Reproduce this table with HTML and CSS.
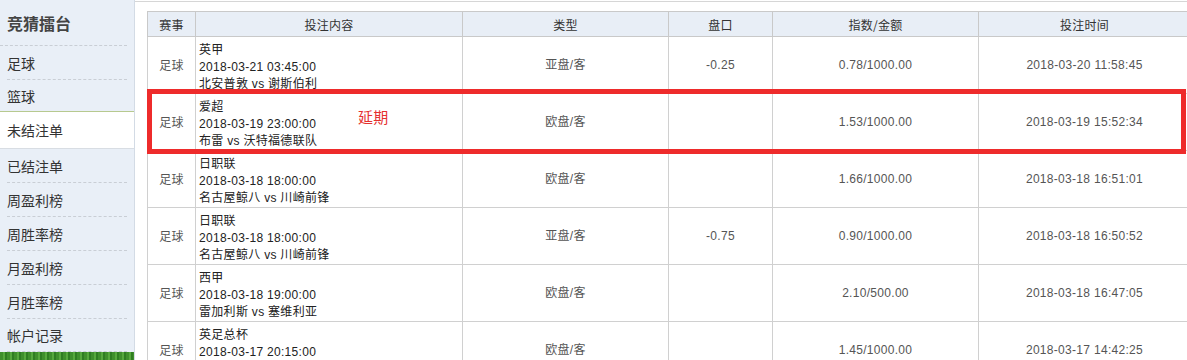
FILE: index.html
```html
<!DOCTYPE html>
<html lang="zh-CN">
<head>
<meta charset="utf-8">
<title>竞猜擂台</title>
<link rel="stylesheet" href="styles.css">
</head>
<body>
<div class="page">
  <aside class="sidebar">
    <div class="side-title">竞猜擂台</div>
    <ul class="side-menu">
      <li class="side-item">足球</li>
      <li class="side-item last-before-active">篮球</li>
      <li class="side-item active">未结注单</li>
      <li class="side-item">已结注单</li>
      <li class="side-item">周盈利榜</li>
      <li class="side-item">周胜率榜</li>
      <li class="side-item">月盈利榜</li>
      <li class="side-item">月胜率榜</li>
      <li class="side-item">帐户记录</li>
    </ul>
    <div class="side-grass"></div>
  </aside>
  <main class="main">
    <div class="table-wrap">
      <table class="bets">
        <colgroup>
          <col class="c-match"><col class="c-content"><col class="c-type"><col class="c-line"><col class="c-odds"><col class="c-time">
        </colgroup>
        <thead>
          <tr><th>赛事</th><th>投注内容</th><th>类型</th><th>盘口</th><th>指数/金额</th><th>投注时间</th></tr>
        </thead>
        <tbody>
          <tr>
            <td class="sport">足球</td>
            <td class="content"><div class="ln">英甲</div><div class="ln">2018-03-21 03:45:00</div><div class="ln">北安普敦 vs 谢斯伯利</div></td>
            <td>亚盘/客</td><td>-0.25</td><td>0.78/1000.00</td><td>2018-03-20 11:58:45</td>
          </tr>
          <tr>
            <td class="sport">足球</td>
            <td class="content"><div class="ln">爱超</div><div class="ln">2018-03-19 23:00:00</div><div class="ln">布雷 vs 沃特福德联队</div><span class="note">延期</span></td>
            <td>欧盘/客</td><td></td><td>1.53/1000.00</td><td>2018-03-19 15:52:34</td>
          </tr>
          <tr>
            <td class="sport">足球</td>
            <td class="content"><div class="ln">日职联</div><div class="ln">2018-03-18 18:00:00</div><div class="ln">名古屋鲸八 vs 川崎前锋</div></td>
            <td>欧盘/客</td><td></td><td>1.66/1000.00</td><td>2018-03-18 16:51:01</td>
          </tr>
          <tr>
            <td class="sport">足球</td>
            <td class="content"><div class="ln">日职联</div><div class="ln">2018-03-18 18:00:00</div><div class="ln">名古屋鲸八 vs 川崎前锋</div></td>
            <td>亚盘/客</td><td>-0.75</td><td>0.90/1000.00</td><td>2018-03-18 16:50:52</td>
          </tr>
          <tr>
            <td class="sport">足球</td>
            <td class="content"><div class="ln">西甲</div><div class="ln">2018-03-18 19:00:00</div><div class="ln">雷加利斯 vs 塞维利亚</div></td>
            <td>欧盘/客</td><td></td><td>2.10/500.00</td><td>2018-03-18 16:47:05</td>
          </tr>
          <tr>
            <td class="sport">足球</td>
            <td class="content"><div class="ln">英足总杯</div><div class="ln">2018-03-17 20:15:00</div><div class="ln"></div></td>
            <td>欧盘/客</td><td></td><td>1.45/1000.00</td><td>2018-03-17 14:42:25</td>
          </tr>
        </tbody>
      </table>
      <div class="highlight"></div>
    </div>
  </main>
</div>
</body>
</html>
```

FILE: styles.css
```css
html, body {
  margin: 0;
  padding: 0;
  background: #fff;
  overflow: hidden;
}
body {
  font-family: "Liberation Sans", "Noto Sans CJK SC", sans-serif;
  color: #333;
}
.page {
  display: flex;
  align-items: flex-start;
  height: 360px;
  overflow: hidden;
}
.sidebar {
  width: 134px;
  flex: none;
  height: 360px;
  background: #e9eff7;
  border-right: 1px solid #d3dbe5;
  display: flex;
  flex-direction: column;
  font-family: "Noto Sans CJK SC", sans-serif;
}
.side-title {
  height: 45px;
  padding-left: 7px;
  display: flex;
  align-items: center;
  font-size: 16px;
  font-weight: bold;
  color: #444;
  border-bottom: 1px dashed #c9ced5;
  margin-right: 7px;
}
.side-menu {
  list-style: none;
  margin: 0;
  padding: 0;
}
.side-item {
  height: 33px;
  margin: 0 7px;
  display: flex;
  align-items: center;
  font-size: 14px;
  color: #333;
  border-bottom: 1px dashed #c9ced5;
}
.side-item.last-before-active {
  height: 31px;
  border-bottom: none;
}
.side-item.active {
  margin: 0;
  padding-left: 7px;
  height: 36px;
  background: #fff;
  border-top: 1px solid #b7c98f;
  border-bottom: 1px solid #d8dde3;
}
.side-item:last-child {
  height: 32px;
}
.side-grass {
  flex: 1;
  background: repeating-linear-gradient(90deg, #3f8f2c 0 3px, #56a83d 3px 5px, #2f7d22 5px 7px);
}
.main {
  flex: 1;
  margin-top: 1px;
  border-top: 1px solid #d6d6d6;
  padding: 9px 0 0 12px;
}
.table-wrap {
  position: relative;
  width: 1043px;
}
.bets {
  border-collapse: collapse;
  table-layout: fixed;
  width: 1043px;
  font-size: 12px;
  letter-spacing: 0.3px;
}
.c-match { width: 48px; }
.c-content { width: 267px; }
.c-type { width: 206px; }
.c-line { width: 104px; }
.c-odds { width: 206px; }
.c-time { width: 212px; }
.bets th {
  height: 24px;
  background: #e8eef6;
  border: 1px solid #c9c9c9;
  font-weight: normal;
  color: #333;
  padding: 0;
  font-family: "Noto Sans CJK SC", sans-serif;
  font-size: 12px;
}
.bets td {
  height: 48px;
  border: 1px solid #d0d0d0;
  text-align: center;
  vertical-align: middle;
  color: #555;
  padding: 0;
  line-height: 16px;
}
.bets td.content {
  text-align: left;
  padding: 5px 3px 0;
  color: #222;
  position: relative;
  vertical-align: top;
}
.bets td.sport {
  font-family: "Noto Sans CJK SC", sans-serif;
}
.ln {
  height: 17px;
  line-height: 17px;
  white-space: nowrap;
}
.note {
  position: absolute;
  left: 162px;
  top: 13px;
  color: #e5302e;
  font-size: 15px;
  line-height: 20px;
  font-family: "Noto Sans CJK SC", sans-serif;
}
.highlight {
  position: absolute;
  left: 0;
  top: 78px;
  width: 1039px;
  height: 65px;
  border: 5px solid #ee2b2b;
  box-sizing: border-box;
  pointer-events: none;
}
```
